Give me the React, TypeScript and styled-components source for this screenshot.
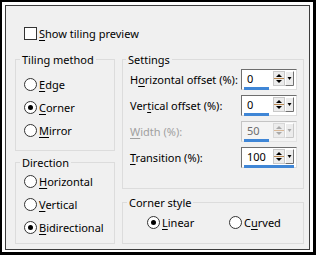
import React from 'react';
import styled, { createGlobalStyle } from 'styled-components';

const Global = createGlobalStyle`
  html, body { margin: 0; padding: 0; background: #fff; }
  body {
    font-family: "Noto Sans", "DejaVu Sans", sans-serif;
    font-size: 11px;
    color: #000;
  }
  u { text-decoration-thickness: 1px; text-underline-offset: 2px; }
`;

const Frame = styled.div`
  width: 316px;
  height: 255px;
  box-sizing: border-box;
  border-style: solid;
  border-color: #000;
  border-width: 2px 3px 3px 2px;
  padding: 3px 3px 2px 3px;
  background: #fff;
`;

const Dialog = styled.div`
  height: 100%;
  box-sizing: border-box;
  border: 1px solid #3c3c3c;
  background: #f0f0f0;
  padding: 20px 0 0 9px;
  display: flex;
  flex-direction: column;
`;

const CheckRow = styled.label`
  display: flex;
  align-items: center;
  gap: 2px;
  height: 15px;
  margin-left: 9px;
`;

const Box = styled.span`
  width: 13px;
  height: 13px;
  box-sizing: border-box;
  border: 1px solid #333;
  background: #fff;
`;

const Columns = styled.div`
  display: grid;
  grid-template-columns: 100px 182px;
  column-gap: 7px;
  margin-top: 11px;
`;

const Column = styled.div<{ $gap: number }>`
  display: flex;
  flex-direction: column;
  gap: ${p => p.$gap}px;
`;

const Group = styled.fieldset<{ $h: number; $pl?: number; $pt?: number }>`
  margin: 0;
  min-width: 0;
  height: ${p => p.$h}px;
  box-sizing: border-box;
  border: 1px solid #dcdcdc;
  padding: ${p => p.$pt ?? 0}px 6px 0 ${p => p.$pl ?? 8}px;
`;

const Legend = styled.legend`
  padding: 0 2px;
  margin-left: -4px;
  line-height: 15px;
`;

const RadioList = styled.div<{ $pt: number }>`
  display: flex;
  flex-direction: column;
  gap: 8px;
  padding-top: ${p => p.$pt}px;
`;

const RadioRow = styled.label<{ $w?: number }>`
  display: flex;
  align-items: center;
  gap: 2px;
  height: 15px;
  width: ${p => (p.$w ? `${p.$w}px` : 'auto')};
`;

const Circle = styled.span<{ $on?: boolean }>`
  width: 13px;
  height: 13px;
  box-sizing: border-box;
  border: 1px solid #333;
  border-radius: 50%;
  background: #fff;
  display: flex;
  align-items: center;
  justify-content: center;
  &::after {
    content: '';
    width: 5px;
    height: 5px;
    border-radius: 50%;
    background: ${p => (p.$on ? '#000' : 'transparent')};
  }
`;

const Rows = styled.div`
  display: flex;
  flex-direction: column;
  gap: 5px;
  padding-top: 2px;
`;

const SetRow = styled.div<{ $disabled?: boolean }>`
  display: grid;
  grid-template-columns: 1fr 56px;
  align-items: center;
  height: 21px;
  color: ${p => (p.$disabled ? '#a0a0a0' : '#000')};
`;

const SpinBox = styled.div<{ $disabled?: boolean }>`
  width: 56px;
  height: 21px;
  box-sizing: border-box;
  border: 1px solid;
  border-color: ${p => (p.$disabled ? '#c4c4c4 #e3e3e3 #e3e3e3 #c4c4c4' : '#6e6e6e #dcdcdc #dcdcdc #6e6e6e')};
  background: ${p => (p.$disabled ? '#f4f4f4' : '#fff')};
  display: flex;
  flex-direction: column;
  padding: 1px 1px 0 2px;
`;

const SpinTop = styled.div`
  display: flex;
  align-items: center;
  height: 15px;
`;

const Value = styled.span<{ $disabled?: boolean }>`
  flex: 1;
  padding-left: 3px;
  color: ${p => (p.$disabled ? '#6d6d6d' : '#000')};
`;

const BarTrack = styled.div`
  height: 3px;
  margin-top: 1px;
  width: 50px;
`;

const Bar = styled.div`
  height: 3px;
  background: #3f86d6;
`;

const CornerRow = styled.div`
  display: flex;
  padding: 5px 0 0 16px;
`;

const Spinner: React.FC<{ disabled?: boolean }> = ({ disabled }) => {
  const c = disabled ? '#a8a8a8' : '#000';
  return (
    <svg width="22" height="15" viewBox="0 0 22 15">
      <rect x="0.5" y="0.5" width="11" height="14" fill="#ececec" stroke={disabled ? '#d8d8d8' : '#c8c8c8'} />
      <polygon points="3,6 9,6 6,3" fill={c} />
      <line x1="1" y1="7.5" x2="11" y2="7.5" stroke={disabled ? '#d8b898' : '#b8864e'} />
      <polygon points="3,9 9,9 6,12" fill={c} />
      <rect x="12.5" y="0.5" width="8" height="14" fill="#ececec" stroke="#fff" />
      <path d="M12.5 14.5 H20.5 V0.5" fill="none" stroke={disabled ? '#c8c8c8' : '#707070'} />
      <polygon points="14.5,6 18.5,6 16.5,9" fill={c} />
    </svg>
  );
};

const Spin: React.FC<{ value: string; frac: number; disabled?: boolean }> = ({ value, frac, disabled }) => (
  <SpinBox $disabled={disabled}>
    <SpinTop>
      <Value $disabled={disabled}>{value}</Value>
      <Spinner disabled={disabled} />
    </SpinTop>
    <BarTrack>
      <Bar style={{ width: `${Math.round(frac * 100)}%` }} />
    </BarTrack>
  </SpinBox>
);

const Radio: React.FC<{ on?: boolean; w?: number; children: React.ReactNode }> = ({ on, w, children }) => (
  <RadioRow $w={w}>
    <Circle $on={on} />
    <span>{children}</span>
  </RadioRow>
);

export default function App() {
  return (
    <>
      <Global />
      <Frame>
        <Dialog>
          <CheckRow>
            <Box />
            <span><u>S</u>how tiling preview</span>
          </CheckRow>
          <Columns>
            <Column $gap={4}>
              <Group $h={99}>
                <Legend>Tiling method</Legend>
                <RadioList $pt={10}>
                  <Radio><u>E</u>dge</Radio>
                  <Radio on><u>C</u>orner</Radio>
                  <Radio><u>M</u>irror</Radio>
                </RadioList>
              </Group>
              <Group $h={89}>
                <Legend>Direction</Legend>
                <RadioList $pt={4}>
                  <Radio><u>H</u>orizontal</Radio>
                  <Radio><u>V</u>ertical</Radio>
                  <Radio on><u>B</u>idirectional</Radio>
                </RadioList>
              </Group>
            </Column>
            <Column $gap={6}>
              <Group $h={137} $pl={7}>
                <Legend>Settings</Legend>
                <Rows>
                  <SetRow>
                    <span>H<u>o</u>rizontal offset (%):</span>
                    <Spin value="0" frac={0.5} />
                  </SetRow>
                  <SetRow>
                    <span>Ver<u>t</u>ical offset (%):</span>
                    <Spin value="0" frac={0.5} />
                  </SetRow>
                  <SetRow $disabled>
                    <span><u>W</u>idth (%):</span>
                    <Spin value="50" frac={0.5} disabled />
                  </SetRow>
                  <SetRow>
                    <span><u>T</u>ransition (%):</span>
                    <Spin value="100" frac={1} />
                  </SetRow>
                </Rows>
              </Group>
              <Group $h={49}>
                <Legend>Corner style</Legend>
                <CornerRow>
                  <Radio on w={82}><u>L</u>inear</Radio>
                  <Radio>C<u>u</u>rved</Radio>
                </CornerRow>
              </Group>
            </Column>
          </Columns>
        </Dialog>
      </Frame>
    </>
  );
}
